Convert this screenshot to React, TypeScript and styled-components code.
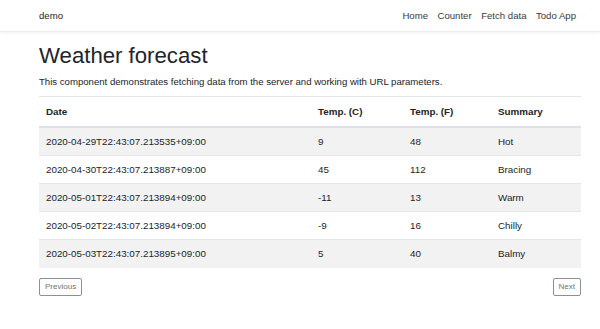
import React from 'react';
import styled, { createGlobalStyle } from 'styled-components';

const GlobalStyle = createGlobalStyle`
  body {
    margin: 0;
    background: #ffffff;
    color: #212529;
    font-family: "Liberation Sans", Arial, sans-serif;
  }
`;

const NavBar = styled.nav`
  height: 31px;
  display: flex;
  align-items: center;
  justify-content: space-between;
  padding: 0 24px 0 39px;
  border-bottom: 1px solid #ececec;
  box-shadow: 0 1px 4px rgba(0, 0, 0, 0.06);
  font-size: 9.6px;
`;

const Brand = styled.span`
  color: #212529;
`;

const NavLinks = styled.div`
  display: flex;
  gap: 9.5px;
`;

const NavLink = styled.span`
  color: #3a3a3a;
`;

const Main = styled.main`
  width: 542px;
  margin-left: 39px;
  padding-top: 11px;
`;

const Title = styled.h1`
  font-size: 22.2px;
  font-weight: 400;
  margin: 0 0 6px;
  line-height: 1.2;
`;

const Lead = styled.p`
  font-size: 9.6px;
  margin: 0 0 9px;
`;

const Table = styled.table`
  width: 100%;
  table-layout: fixed;
  border-collapse: collapse;
  font-size: 9.8px;
`;

const Th = styled.th<{ w?: number }>`
  text-align: left;
  font-weight: 700;
  padding: 0 7px;
  height: 29px;
  border-top: 1px solid #e4e6e8;
  border-bottom: 2px solid #dee2e6;
  width: ${({ w }) => (w ? `${w}px` : 'auto')};
`;

const Row = styled.tr<{ striped: boolean }>`
  background: ${({ striped }) => (striped ? '#f2f2f2' : 'transparent')};
`;

const Td = styled.td`
  padding: 0 7px;
  height: 27.2px;
  border-top: 1px solid #e4e6e8;
`;

const Pager = styled.div`
  display: flex;
  justify-content: space-between;
  margin-top: 10px;
`;

const PageButton = styled.button`
  font-family: inherit;
  font-size: 8px;
  height: 18px;
  padding: 0 5px;
  color: #6c757d;
  background: #ffffff;
  border: 1px solid #8a9096;
  border-radius: 2px;
`;

const rows = [
  { date: '2020-04-29T22:43:07.213535+09:00', c: 9, f: 48, summary: 'Hot' },
  { date: '2020-04-30T22:43:07.213887+09:00', c: 45, f: 112, summary: 'Bracing' },
  { date: '2020-05-01T22:43:07.213894+09:00', c: -11, f: 13, summary: 'Warm' },
  { date: '2020-05-02T22:43:07.213894+09:00', c: -9, f: 16, summary: 'Chilly' },
  { date: '2020-05-03T22:43:07.213895+09:00', c: 5, f: 40, summary: 'Balmy' },
];

const App: React.FC = () => (
  <>
    <GlobalStyle />
    <NavBar>
      <Brand>demo</Brand>
      <NavLinks>
        <NavLink>Home</NavLink>
        <NavLink>Counter</NavLink>
        <NavLink>Fetch data</NavLink>
        <NavLink>Todo App</NavLink>
      </NavLinks>
    </NavBar>
    <Main>
      <Title>Weather forecast</Title>
      <Lead>This component demonstrates fetching data from the server and working with URL parameters.</Lead>
      <Table>
        <thead>
          <tr>
            <Th w={258}>Date</Th>
            <Th w={78}>Temp. (C)</Th>
            <Th w={74}>Temp. (F)</Th>
            <Th>Summary</Th>
          </tr>
        </thead>
        <tbody>
          {rows.map((r, i) => (
            <Row key={r.date} striped={i % 2 === 0}>
              <Td>{r.date}</Td>
              <Td>{r.c}</Td>
              <Td>{r.f}</Td>
              <Td>{r.summary}</Td>
            </Row>
          ))}
        </tbody>
      </Table>
      <Pager>
        <PageButton>Previous</PageButton>
        <PageButton>Next</PageButton>
      </Pager>
    </Main>
  </>
);

export default App;
